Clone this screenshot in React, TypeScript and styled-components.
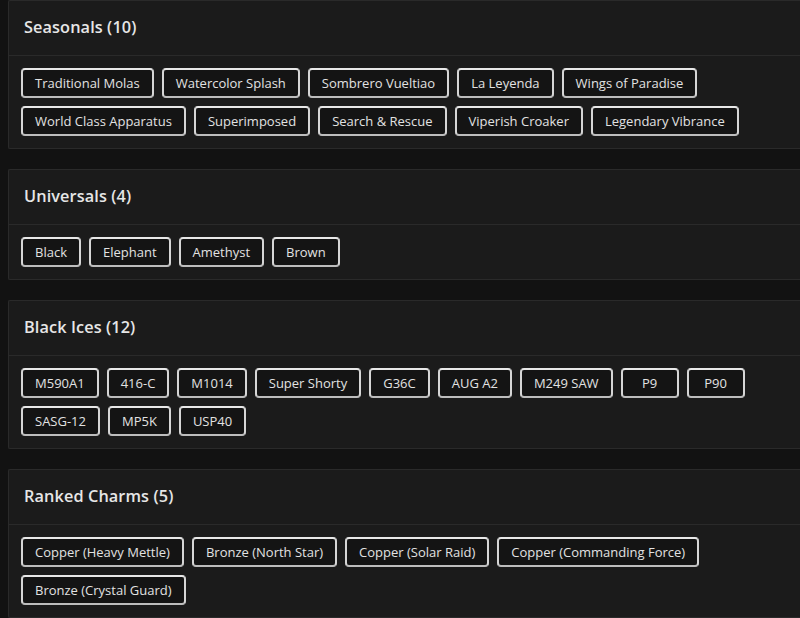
import React from "react";
import styled, { createGlobalStyle } from "styled-components";

const GlobalStyle = createGlobalStyle`
  html, body {
    margin: 0;
    padding: 0;
    background: #121212;
    overflow: hidden;
  }
  body {
    font-family: "Open Sans", "Noto Sans", sans-serif;
    color: #e4e4e4;
  }
`;

const Page = styled.div`
  display: flex;
  flex-direction: column;
  gap: 20px;
  padding: 0 0 0 8px;
  width: 800px;
  box-sizing: border-box;
`;

const Card = styled.section`
  background: #1b1b1b;
  border: 1px solid #2a2a2a;
  border-right: none;
  border-radius: 2px 0 0 2px;
`;

const Header = styled.div`
  height: 51px;
  display: flex;
  align-items: center;
  padding: 0 15px 3px;
  border-bottom: 1px solid #2a2a2a;
`;

const Title = styled.h2`
  margin: 0;
  font-size: 16.3px;
  font-weight: 600;
  color: #e6e6e6;
  letter-spacing: 0.1px;
`;

const Body = styled.div`
  display: flex;
  flex-wrap: wrap;
  gap: 8px;
  padding: 12px 12px;
`;

const Chip = styled.span`
  display: inline-flex;
  align-items: center;
  justify-content: center;
  min-width: 58px;
  height: 30px;
  box-sizing: border-box;
  padding: 0 12px;
  border: 2px solid #d6d6d6;
  border-top-color: #e8e8e8;
  border-bottom-color: #bdbdbd;
  border-radius: 4px;
  background: #141414;
  color: #e2e2e2;
  font-size: 13px;
  white-space: nowrap;
`;

const sections: { title: string; items: string[] }[] = [
  {
    title: "Seasonals (10)",
    items: [
      "Traditional Molas",
      "Watercolor Splash",
      "Sombrero Vueltiao",
      "La Leyenda",
      "Wings of Paradise",
      "World Class Apparatus",
      "Superimposed",
      "Search & Rescue",
      "Viperish Croaker",
      "Legendary Vibrance",
    ],
  },
  {
    title: "Universals (4)",
    items: ["Black", "Elephant", "Amethyst", "Brown"],
  },
  {
    title: "Black Ices (12)",
    items: [
      "M590A1",
      "416-C",
      "M1014",
      "Super Shorty",
      "G36C",
      "AUG A2",
      "M249 SAW",
      "P9",
      "P90",
      "SASG-12",
      "MP5K",
      "USP40",
    ],
  },
  {
    title: "Ranked Charms (5)",
    items: [
      "Copper (Heavy Mettle)",
      "Bronze (North Star)",
      "Copper (Solar Raid)",
      "Copper (Commanding Force)",
      "Bronze (Crystal Guard)",
    ],
  },
];

export default function App() {
  return (
    <>
      <GlobalStyle />
      <Page>
        {sections.map((s) => (
          <Card key={s.title}>
            <Header>
              <Title>{s.title}</Title>
            </Header>
            <Body>
              {s.items.map((it) => (
                <Chip key={it}>{it}</Chip>
              ))}
            </Body>
          </Card>
        ))}
      </Page>
    </>
  );
}
